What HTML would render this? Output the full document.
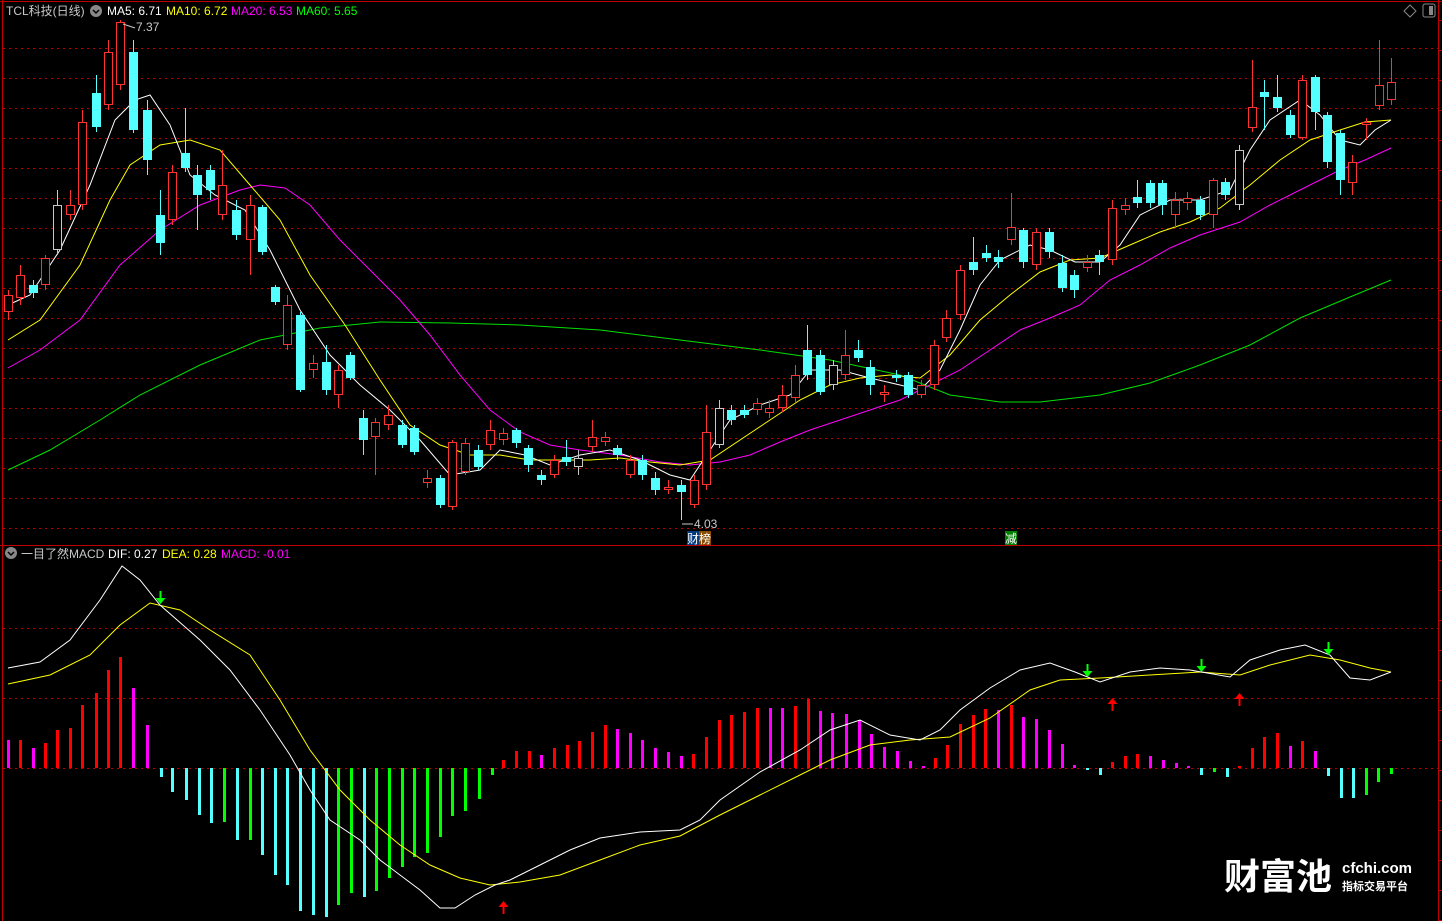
<!DOCTYPE html>
<html><head><meta charset="utf-8"><style>
html,body{margin:0;padding:0;background:#000;width:1442px;height:921px;overflow:hidden}
svg{display:block}
text{font-family:"Liberation Sans","Noto Sans CJK SC",sans-serif;font-size:12px}
</style></head><body>
<svg id="s" width="1442" height="921" xmlns="http://www.w3.org/2000/svg">
<rect width="1442" height="921" fill="#000"/>
<g id="grid"></g>
<line x1="2.5" y1="0" x2="2.5" y2="921" stroke="#c00000"/>
<line x1="1438.5" y1="0" x2="1438.5" y2="921" stroke="#c00000"/>
<line x1="0" y1="1.5" x2="1442" y2="1.5" stroke="#c00000"/>
<line x1="0" y1="545.5" x2="1442" y2="545.5" stroke="#c00000"/>
<g id="ma"></g>
<g id="candles"></g>
<g id="macd"></g>
<text x="6" y="15" fill="#c8c8c8">TCL科技(日线)</text>
<circle cx="96" cy="11" r="6" fill="#888"/><path d="M93 10l3 3 3-3" stroke="#000" stroke-width="1.5" fill="none"/>
<text x="107" y="15" fill="#fff">MA5: 6.71</text>
<text x="166" y="15" fill="#ffff00">MA10: 6.72</text>
<text x="231" y="15" fill="#ff00ff">MA20: 6.53</text>
<text x="296" y="15" fill="#00ff00">MA60: 5.65</text>
<text x="136" y="31" fill="#c8c8c8">7.37</text><path d="M123 24l12 4" stroke="#c8c8c8"/>
<text x="694" y="528" fill="#c8c8c8">4.03</text><path d="M682 524h11" stroke="#c8c8c8"/>
<rect x="687" y="531" width="12" height="14" fill="#003a7a"/><rect x="699" y="531" width="12" height="14" fill="#8a4a00"/>
<text x="687" y="543" fill="#fff">财榜</text>
<rect x="1005" y="531" width="12" height="14" fill="#008000"/><text x="1005" y="543" fill="#fff">减</text>
<path d="M1404 11l6-6 6 6-6 6z" stroke="#888" fill="none"/>
<rect x="1423" y="4" width="12" height="13" rx="2" stroke="#888" fill="none"/><rect x="1429" y="6" width="4" height="9" fill="#888"/>
<circle cx="11" cy="553" r="6" fill="#888"/><path d="M8 552l3 3 3-3" stroke="#000" stroke-width="1.5" fill="none"/>
<text x="21" y="558" fill="#c8c8c8">一目了然MACD</text>
<text x="108" y="558" fill="#fff">DIF: 0.27</text>
<text x="162" y="558" fill="#ffff00">DEA: 0.28</text>
<text x="221" y="558" fill="#ff00ff">MACD: -0.01</text>
<text x="1224" y="889" fill="#fff" style="font-size:36px;font-weight:bold;font-family:'Noto Sans CJK SC',sans-serif">财富池</text>
<text x="1342" y="873" fill="#fff" style="font-size:15px;font-weight:bold">cfchi.com</text>
<text x="1342" y="890" fill="#fff" style="font-size:11px;font-weight:bold;font-family:'Noto Sans CJK SC',sans-serif">指标交易平台</text>
</svg>
<script>
var NS="http://www.w3.org/2000/svg";
function el(p,t,a){var e=document.createElementNS(NS,t);for(var k in a)e.setAttribute(k,a[k]);document.getElementById(p).appendChild(e);return e;}
var g="grid";
for(var y=48;y<=528;y+=30)el(g,"line",{x1:3,y1:y+.5,x2:1438,y2:y+.5,stroke:"#c00000","stroke-dasharray":"2 4"});
[628,698,768].forEach(function(y){el(g,"line",{x1:3,y1:y+.5,x2:1438,y2:y+.5,stroke:"#c00000","stroke-dasharray":"2 4"});});
for(var y=20;y<921;y+=30)el(g,"line",{x1:1438,y1:y+.5,x2:1442,y2:y+.5,stroke:"#c00000"});
function pl(p,pts,c){el(p,"polyline",{points:pts,fill:"none",stroke:c,"stroke-width":1});}
pl("ma","8,470 50,450 100,420 140,395 200,365 260,340 320,328 380,322 450,323 520,325 600,330 680,340 760,350 830,360 900,375 950,395 1000,402 1040,402 1100,395 1150,383 1200,365 1250,345 1300,318 1350,297 1391,280","#00e000");
pl("ma","8,368 40,350 80,320 120,265 160,230 200,205 240,190 260,185 285,188 310,205 340,240 370,270 400,300 430,335 460,375 490,410 520,432 550,445 580,450 620,455 660,462 690,465 720,462 750,455 780,442 810,430 840,420 870,410 900,400 930,385 960,370 990,350 1020,330 1050,318 1080,305 1110,280 1140,265 1170,248 1200,235 1240,222 1270,205 1300,190 1340,170 1365,160 1391,148","#ff00ff");
pl("ma","8,340 40,320 80,265 110,200 130,165 160,145 190,140 220,150 250,185 280,220 310,275 345,325 380,380 410,425 440,445 470,455 500,455 530,460 560,460 590,460 620,458 650,462 680,465 710,460 740,440 770,420 800,400 830,385 860,378 890,375 920,378 950,355 980,320 1010,295 1040,272 1070,260 1100,258 1130,245 1160,232 1190,222 1220,208 1250,185 1280,160 1310,140 1340,130 1365,122 1391,120","#ffff00");
pl("ma","8,305 30,295 60,250 90,185 115,120 135,100 150,95 170,125 190,175 215,195 245,210 270,250 300,310 330,355 360,385 390,410 420,440 450,475 480,470 500,450 525,455 550,465 580,455 610,450 640,460 670,475 690,480 710,450 730,420 760,405 790,395 810,370 840,370 870,378 900,385 920,390 940,370 960,330 980,285 1000,260 1030,245 1050,250 1075,262 1100,262 1120,245 1140,215 1170,200 1200,200 1230,190 1250,150 1270,120 1300,100 1320,115 1340,140 1360,145 1375,130 1391,120","#fff");
var C=[[8,295,312,'r',290,320],[20,275,298,'r',265,305],[33,285,293,'c',280,298],[45,258,285,'r',255,290],[57,205,250,'w',190,255],[70,205,215,'r',190,220],[82,122,205,'r',110,210],[96,93,127,'c',75,132],[108,52,105,'r',40,110],[120,22,85,'r',20,90],[133,52,130,'c',40,133],[147,110,160,'c',100,175],[160,215,243,'c',190,255],[172,172,220,'r',165,225],[185,153,168,'c',108,172],[197,175,195,'c',165,230],[210,170,190,'c',165,200],[222,185,215,'r',150,220],[236,210,235,'c',200,240],[250,205,240,'r',195,275],[262,207,252,'c',205,255],[275,287,302,'c',285,305],[287,305,345,'r',295,350],[300,315,390,'c',312,392],[313,363,370,'r',355,378],[326,362,390,'c',345,395],[338,370,395,'r',365,408],[350,355,378,'c',352,380],[363,418,440,'c',410,455],[375,422,437,'r',418,475],[388,415,425,'r',405,430],[402,425,445,'c',420,448],[414,428,452,'c',425,455],[427,478,483,'r',470,488],[440,478,505,'c',475,508],[452,442,507,'r',440,510],[465,443,472,'r',438,475],[478,450,467,'c',445,470],[490,430,445,'r',420,450],[503,433,440,'r',428,445],[516,430,443,'c',428,448],[528,448,465,'c',445,472],[541,475,480,'c',470,485],[554,460,475,'r',455,478],[566,457,462,'c',440,466],[578,458,467,'w',450,475],[592,437,447,'r',420,452],[605,437,442,'r',432,446],[617,448,455,'c',445,460],[630,460,475,'r',455,478],[642,460,475,'c',455,480],[655,478,490,'c',472,495],[668,487,490,'r',480,494],[681,485,492,'c',480,520],[694,480,505,'r',475,508],[706,432,485,'r',405,490],[719,408,445,'w',400,448],[731,410,420,'c',405,425],[744,410,415,'c',405,418],[757,403,410,'r',398,415],[769,408,413,'r',400,418],[782,395,408,'r',385,412],[795,375,398,'r',365,402],[807,350,375,'c',325,380],[820,355,392,'c',350,395],[833,365,385,'w',360,390],[845,355,375,'r',330,380],[858,350,358,'c',340,362],[870,367,385,'c',360,395],[884,392,395,'r',385,402],[896,375,378,'c',370,382],[908,375,395,'c',372,398],[921,385,395,'r',380,398],[934,345,385,'r',340,390],[946,318,338,'r',310,342],[960,270,315,'r',265,320],[973,262,270,'c',237,275],[986,253,258,'c',245,262],[998,257,262,'c',250,268],[1011,227,240,'r',193,245],[1023,230,262,'c',228,268],[1036,232,265,'r',228,270],[1049,232,252,'c',228,258],[1062,263,288,'c',255,292],[1074,275,290,'c',270,298],[1087,262,268,'r',255,272],[1099,255,262,'c',250,275],[1112,208,260,'r',200,265],[1125,205,210,'r',198,215],[1137,197,203,'c',180,208],[1150,183,203,'c',180,208],[1162,183,205,'c',180,215],[1175,200,215,'r',192,228],[1187,198,203,'r',192,210],[1200,200,215,'c',196,220],[1213,180,215,'r',178,228],[1225,182,195,'c',178,200],[1239,150,205,'w',145,210],[1252,107,128,'r',60,132],[1264,92,97,'c',80,130],[1277,97,108,'c',75,112],[1290,115,135,'c',110,138],[1302,80,138,'r',75,140],[1315,77,112,'c',75,130],[1327,115,162,'c',112,168],[1340,133,180,'c',130,195],[1352,162,183,'r',155,195],[1366,122,125,'r',118,140],[1379,85,106,'r',40,110],[1391,82,100,'r',58,105]];
var col={r:"#ff3232",c:"#54ffff",w:"#c8c8c8"};
C.forEach(function(d){var c=col[d[3]];el("candles","line",{x1:d[0]+.5,y1:d[4],x2:d[0]+.5,y2:d[5],stroke:c});
 if(d[3]=='c')el("candles","rect",{x:d[0]-4,y:d[1],width:9,height:Math.max(1,d[2]-d[1]),fill:c});
 else el("candles","rect",{x:d[0]-3.5,y:d[1]+.5,width:8,height:Math.max(1,d[2]-d[1]-1),fill:"#000",stroke:c});});
var M=[[8,740,'m'],[20,740,'r'],[33,748,'m'],[45,743,'r'],[57,730,'r'],[70,728,'r'],[82,705,'r'],[96,693,'r'],[108,670,'r'],[120,657,'r'],[133,688,'m'],[147,725,'m'],[161,777,'c'],[172,792,'c'],[186,800,'c'],[199,815,'c'],[211,823,'c'],[224,822,'g'],[237,840,'c'],[250,840,'g'],[262,855,'c'],[275,875,'c'],[287,885,'c'],[300,911,'c'],[313,915,'c'],[326,917,'c'],[338,905,'g'],[351,893,'g'],[364,897,'c'],[376,891,'g'],[389,878,'g'],[402,867,'g'],[414,857,'g'],[427,853,'g'],[440,837,'g'],[452,816,'g'],[465,811,'g'],[479,799,'g'],[492,775,'g'],[503,760,'r'],[516,751,'r'],[529,751,'r'],[541,755,'m'],[554,748,'r'],[567,745,'r'],[579,741,'r'],[592,732,'r'],[605,725,'r'],[617,729,'m'],[630,733,'m'],[642,740,'m'],[655,748,'m'],[668,752,'m'],[681,756,'m'],[693,754,'r'],[706,737,'r'],[719,720,'r'],[731,715,'r'],[744,712,'r'],[757,708,'r'],[770,708,'m'],[782,708,'m'],[795,706,'r'],[808,699,'r'],[820,711,'m'],[832,713,'m'],[846,714,'m'],[859,720,'m'],[871,734,'m'],[884,747,'m'],[897,751,'m'],[910,761,'m'],[923,766,'m'],[935,758,'r'],[947,745,'r'],[960,724,'r'],[973,715,'r'],[985,709,'r'],[998,710,'m'],[1011,705,'r'],[1023,717,'m'],[1036,719,'m'],[1049,730,'m'],[1062,744,'m'],[1074,765,'m'],[1087,770,'c'],[1100,775,'c'],[1112,762,'r'],[1125,756,'r'],[1137,754,'r'],[1150,756,'m'],[1163,760,'m'],[1176,763,'m'],[1188,766,'m'],[1201,775,'c'],[1214,772,'g'],[1227,777,'c'],[1239,766,'r'],[1252,748,'r'],[1264,737,'r'],[1277,733,'r'],[1290,746,'m'],[1302,741,'r'],[1315,751,'m'],[1328,776,'c'],[1341,798,'c'],[1353,798,'c'],[1366,795,'g'],[1378,782,'g'],[1391,774,'g']];
var mc={r:"#ff0000",m:"#ff00ff",c:"#54ffff",g:"#00ff00"};
M.forEach(function(d){var y0=768,t=Math.min(y0,d[1]),h=Math.abs(d[1]-y0);el("macd","rect",{x:d[0]-1,y:t,width:3,height:Math.max(1,h),fill:mc[d[2]]});});
pl("macd","8,684 50,675 90,655 120,625 150,603 180,610 210,630 250,655 280,700 310,750 340,790 370,820 400,845 430,865 460,878 490,885 520,882 560,875 600,860 640,845 680,836 720,815 760,795 800,775 830,760 870,745 910,740 950,737 990,718 1030,690 1060,680 1100,678 1150,675 1200,672 1240,675 1270,665 1310,655 1340,660 1370,668 1391,672","#ffff00");
pl("macd","8,668 40,662 70,640 100,600 122,566 140,580 160,605 200,640 230,670 260,710 290,755 310,790 330,820 360,840 380,860 400,875 420,890 440,908 455,908 475,895 495,885 510,880 540,865 570,850 600,838 640,832 680,830 700,820 720,800 760,772 800,750 830,730 860,720 890,735 920,740 940,730 960,710 990,688 1020,670 1050,663 1075,672 1100,682 1130,672 1160,668 1190,670 1230,677 1250,660 1280,650 1305,645 1330,655 1350,678 1370,680 1391,672","#fff");
function arrow(x,y,up,c){var p=up?"M"+(x+.5)+" "+(y-7)+"l-5 6h4v7h2v-7h4z":"M"+(x+.5)+" "+(y+7)+"l-5 -6h4v-7h2v7h4z";el("macd","path",{d:p,fill:c});}
arrow(160,597,false,"#00ff00");arrow(1087,670,false,"#00ff00");arrow(1201,665,false,"#00ff00");arrow(1328,648,false,"#00ff00");
arrow(503,908,true,"#ff0000");arrow(1112,705,true,"#ff0000");arrow(1239,700,true,"#ff0000");
</script>
</body></html>
